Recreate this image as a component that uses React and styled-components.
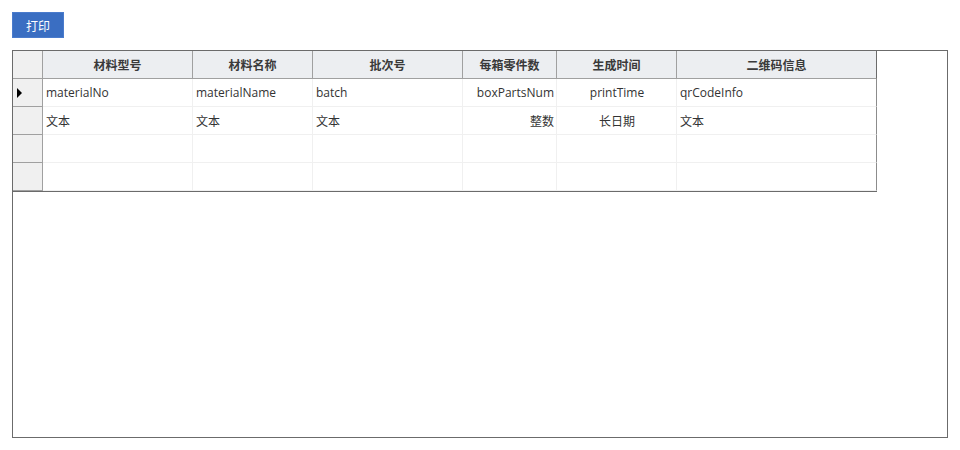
import React from "react";
import styled, { createGlobalStyle } from "styled-components";

const GlobalStyle = createGlobalStyle`
  body {
    margin: 0;
    background: #ffffff;
    font-family: "Open Sans", "Noto Sans CJK SC", sans-serif;
  }
`;

const Page = styled.div`
  padding: 12px;
  width: 936px;
  display: flex;
  flex-direction: column;
  gap: 12px;
`;

const PrintButton = styled.button`
  width: 52px;
  height: 26px;
  border: 1px solid #4a7bcc;
  background: #3a6ec2;
  color: #ffffff;
  font-family: "Noto Sans CJK SC", sans-serif;
  font-size: 12px;
  padding: 0;
  cursor: pointer;
`;

const Panel = styled.div`
  width: 936px;
  height: 388px;
  box-sizing: border-box;
  border: 1px solid #6b6b6b;
  background: #ffffff;
`;

const Grid = styled.div`
  display: grid;
  grid-template-columns: 30px 150px 120px 150px 94px 120px 200px;
  grid-auto-rows: 28px;
  width: 864px;
  border-bottom: 1px solid #6b6b6b;
`;

const Row = styled.div`
  display: contents;
`;

const HeaderCell = styled.div`
  box-sizing: border-box;
  display: flex;
  align-items: center;
  justify-content: center;
  background: ${({ $corner }) => ($corner ? "#f0f0f0" : "#eceef1")};
  border-right: 1px solid ${({ $last }) => ($last ? "#6b6b6b" : "#a0a0a0")};
  border-bottom: 1px solid #a0a0a0;
  font-family: "Noto Sans CJK SC", sans-serif;
  font-size: 12px;
  font-weight: 700;
  color: #3a3a3a;
`;

const RowHead = styled.div`
  box-sizing: border-box;
  display: flex;
  align-items: center;
  padding-left: 4px;
  background: #f0f0f0;
  border-right: 1px solid #a0a0a0;
  border-bottom: 1px solid #a0a0a0;
`;

const Arrow = styled.span`
  width: 0;
  height: 0;
  border-top: 5px solid transparent;
  border-bottom: 5px solid transparent;
  border-left: 5px solid #000000;
`;

const Cell = styled.div`
  box-sizing: border-box;
  display: flex;
  align-items: center;
  justify-content: ${({ $align }) =>
    $align === "right" ? "flex-end" : $align === "center" ? "center" : "flex-start"};
  padding: 0 2px 0 3px;
  border-right: 1px solid ${({ $last }) => ($last ? "#8c8c8c" : "#f0f0f0")};
  border-bottom: 1px solid #f0f0f0;
  font-size: 12px;
  color: #333333;
  white-space: nowrap;
  overflow: hidden;
`;

const columns = [
  { title: "材料型号", align: "left" },
  { title: "材料名称", align: "left" },
  { title: "批次号", align: "left" },
  { title: "每箱零件数", align: "right" },
  { title: "生成时间", align: "center" },
  { title: "二维码信息", align: "left" },
];

const rows = [
  ["materialNo", "materialName", "batch", "boxPartsNum", "printTime", "qrCodeInfo"],
  ["文本", "文本", "文本", "整数", "长日期", "文本"],
  ["", "", "", "", "", ""],
  ["", "", "", "", "", ""],
];

const App = () => {
  return (
    <Page>
      <GlobalStyle />
      <PrintButton>打印</PrintButton>
      <Panel>
        <Grid>
          <Row>
            <HeaderCell $corner />
            {columns.map((c, i) => (
              <HeaderCell key={c.title} $last={i === columns.length - 1}>
                {c.title}
              </HeaderCell>
            ))}
          </Row>
          {rows.map((r, ri) => (
            <Row key={ri}>
              <RowHead>{ri === 0 && <Arrow />}</RowHead>
              {r.map((v, ci) => (
                <Cell
                  key={ci}
                  $align={columns[ci].align}
                  $last={ci === r.length - 1}
                >
                  {v}
                </Cell>
              ))}
            </Row>
          ))}
        </Grid>
      </Panel>
    </Page>
  );
};

export default App;
